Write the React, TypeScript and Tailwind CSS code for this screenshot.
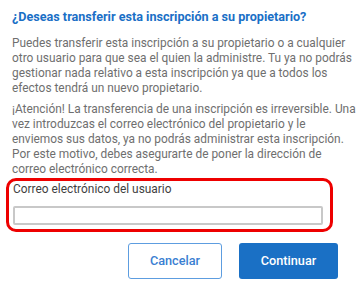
export default function App() {
  return (
    <div className="w-[358px] h-[292px] bg-white overflow-hidden pl-3 pr-[2px] pt-[9px] font-['Roboto',sans-serif]">
      <h2 className="text-[12.6px] leading-[16px] font-bold text-[#1a6fc6]">
        ¿Deseas transferir esta inscripción a su propietario?
      </h2>
      <p className="mt-[11px] text-[11.9px] leading-[15px] text-[#6f6f6f]">
        Puedes transferir esta inscripción a su propietario o a cualquier otro usuario para que sea el quien la
        administre. Tu ya no podrás gestionar nada relativo a esta inscripción ya que a todos los efectos tendrá un
        nuevo propietario.
      </p>
      <p className="mt-[6px] text-[11.9px] leading-[15px] text-[#6f6f6f]">
        ¡Atención! La transferencia de una inscripción es irreversible. Una vez introduzcas el correo electrónico del
        propietario y le enviemos sus datos, ya no podrás administrar esta inscripción. Por este motivo, debes
        asegurarte de poner la dirección de correo electrónico correcta.
      </p>
      <div className="mt-[1px] ml-[-6px] w-[327px] border-[3px] border-[#ee0000] rounded-[10px] pl-[4px] pr-[7px] pt-[1px] pb-[4px]">
        <label className="block text-[11.9px] leading-[15px] text-[#3f3f3f]">Correo electrónico del usuario</label>
        <input
          type="text"
          className="mt-[9px] block w-full h-[19px] border-2 border-[#c8c8c8] rounded-[2px] outline-none"
        />
      </div>
      <div className="mt-[11px] mr-[18px] flex justify-end gap-[17px]">
        <button className="w-[94px] h-[36px] rounded-[3px] border border-[#5d9de0] bg-white text-[12.7px] font-medium text-[#3a80d2]">
          Cancelar
        </button>
        <button className="w-[99px] h-[36px] rounded-[3px] bg-[#1a70c5] text-[12.7px] font-medium text-white">
          Continuar
        </button>
      </div>
    </div>
  );
}
